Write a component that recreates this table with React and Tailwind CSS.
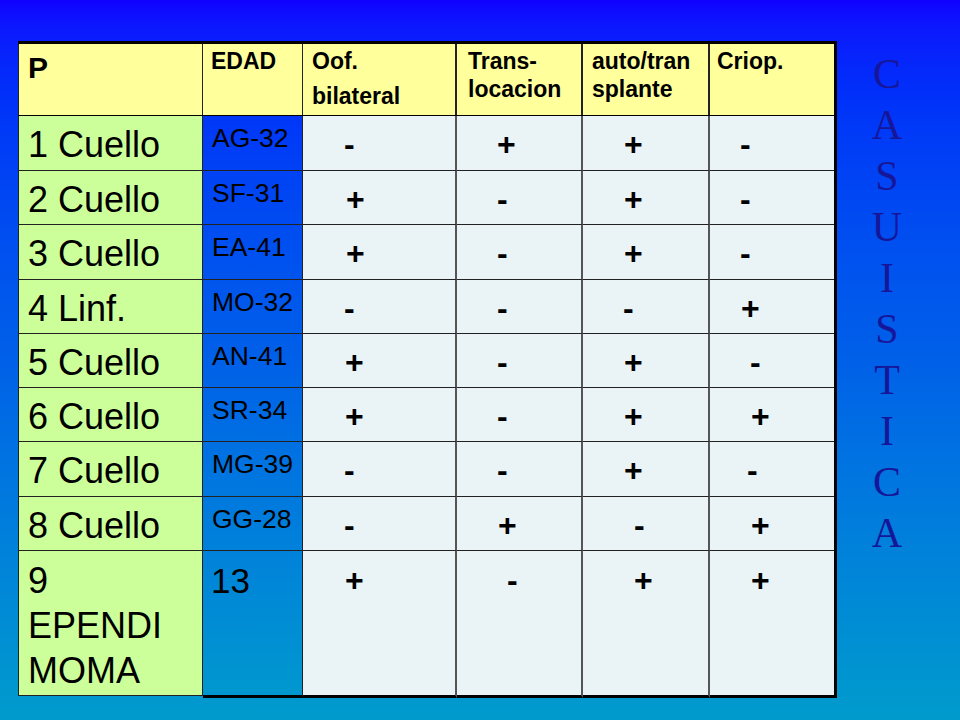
const rows = [
  { h: "h-[55px]", name: "1 Cuello", edad: "AG-32", signs: [["-", "pl-[41px]"], ["+", "pl-[40px]"], ["+", "pl-[41px]"], ["-", "pl-[30px]"]] },
  { h: "h-[54px]", name: "2 Cuello", edad: "SF-31", signs: [["+", "pl-[43px]"], ["-", "pl-[40px]"], ["+", "pl-[41px]"], ["-", "pl-[30px]"]] },
  { h: "h-[55px]", name: "3 Cuello", edad: "EA-41", signs: [["+", "pl-[43px]"], ["-", "pl-[40px]"], ["+", "pl-[41px]"], ["-", "pl-[30px]"]] },
  { h: "h-[54px]", name: "4 Linf.", edad: "MO-32", signs: [["-", "pl-[41px]"], ["-", "pl-[40px]"], ["-", "pl-[40px]"], ["+", "pl-[31px]"]] },
  { h: "h-[54px]", name: "5 Cuello", edad: "AN-41", signs: [["+", "pl-[42px]"], ["-", "pl-[40px]"], ["+", "pl-[41px]"], ["-", "pl-[40px]"]] },
  { h: "h-[54px]", name: "6 Cuello", edad: "SR-34", signs: [["+", "pl-[42px]"], ["-", "pl-[40px]"], ["+", "pl-[41px]"], ["+", "pl-[41px]"]] },
  { h: "h-[55px]", name: "7 Cuello", edad: "MG-39", signs: [["-", "pl-[41px]"], ["-", "pl-[40px]"], ["+", "pl-[41px]"], ["-", "pl-[37px]"]] },
  { h: "h-[54px]", name: "8 Cuello", edad: "GG-28", signs: [["-", "pl-[41px]"], ["+", "pl-[41px]"], ["-", "pl-[51px]"], ["+", "pl-[41px]"]] },
];

const lastSigns = [["+", "pl-[42px]"], ["-", "pl-[50px]"], ["+", "pl-[51px]"], ["+", "pl-[41px]"]];

// data columns: width + right border
const dataCols = [
  "w-[154px] border-r-2 border-r-[#555]",
  "w-[126px] border-r-2 border-r-[#555]",
  "w-[127px] border-r-2 border-r-[#555]",
  "w-[124px]",
];

const headCols = [
  "w-[154px] border-r-2 border-r-[#222] pl-[9px]",
  "w-[126px] border-r-2 border-r-[#222] pl-[11px]",
  "w-[127px] border-r-2 border-r-[#222] pl-[9px]",
  "w-[124px] pl-[7px]",
];

const letters = ["C", "A", "S", "U", "I", "S", "T", "I", "C", "A"];

export default function App() {
  return (
    <div className="w-[960px] h-[720px] flex pt-[41px] pl-[18px] bg-linear-to-b from-[#1000ff] via-[#0060e8] to-[#009bcc] font-['Liberation_Sans',Arial,sans-serif] text-black">
      <div className="w-[819px] self-start border-t-[3px] border-r-[3px] border-black">
        {/* header */}
        <div className="flex h-[72px] border-b border-black bg-[#ffff9c] font-bold">
          <div className="w-[185px] border-l border-r border-[#222] pl-[9px] pt-[6px] text-[30px] leading-[36px]">P</div>
          <div className="w-[100px] border-r border-[#222] pl-[8px] pt-[3px] text-[23px] leading-[28px]">EDAD</div>
          <div className={headCols[0] + " pt-[3px] text-[23px] leading-[28px]"}>
            <div>Oof.</div>
            <div className="mt-[7px]">bilateral</div>
          </div>
          <div className={headCols[1] + " pt-[3px] text-[23px] leading-[28px]"}>
            <div>Trans-</div>
            <div>locacion</div>
          </div>
          <div className={headCols[2] + " pt-[3px] text-[23px] leading-[28px]"}>
            <div>auto/tran</div>
            <div>splante</div>
          </div>
          <div className={headCols[3] + " pt-[3px] text-[23px] leading-[28px]"}>Criop.</div>
        </div>

        {rows.map((r) => (
          <div key={r.name} className={"flex " + r.h}>
            <div className="w-[185px] border-l border-r border-b border-[#222] bg-[#ccff99] pl-[9px] pt-[6px] text-[36px] leading-[45px]">
              {r.name}
            </div>
            <div className="w-[100px] border-r border-b border-[#222] pl-[9px] pt-[6px] text-[26.5px] leading-[32px]">
              {r.edad}
            </div>
            {r.signs.map(([s, pl], i) => (
              <div
                key={i}
                className={dataCols[i] + " border-b border-b-[#222] bg-[#eaf4f6] pt-[8px] font-bold text-[32px] leading-[40px] " + pl}
              >
                {s}
              </div>
            ))}
          </div>
        ))}

        {/* last row */}
        <div className="flex items-start">
          <div className="w-[185px] h-[145px] border-l border-r border-b border-[#222] bg-[#ccff99] pl-[9px] pt-[7px] text-[36px] leading-[45px]">
            <div>9</div>
            <div>EPENDI</div>
            <div>MOMA</div>
          </div>
          <div className="w-[100px] h-[147px] border-r border-[#222] border-b-[3px] border-b-black pl-[8px] pt-[7px] text-[35px] leading-[45px]">
            13
          </div>
          {lastSigns.map(([s, pl], i) => (
            <div
              key={i}
              className={dataCols[i] + " h-[147px] border-b-[3px] border-b-black bg-[#eaf4f6] pt-[9px] font-bold text-[32px] leading-[40px] " + pl}
            >
              {s}
            </div>
          ))}
        </div>
      </div>

      {/* vertical title */}
      <div className="w-[100px] flex flex-col items-center pt-[8px] font-['Liberation_Serif','Times_New_Roman',serif] text-[42px] leading-[51px] text-[#16169a]">
        {letters.map((l, i) => (
          <div key={i}>{l}</div>
        ))}
      </div>
    </div>
  );
}
